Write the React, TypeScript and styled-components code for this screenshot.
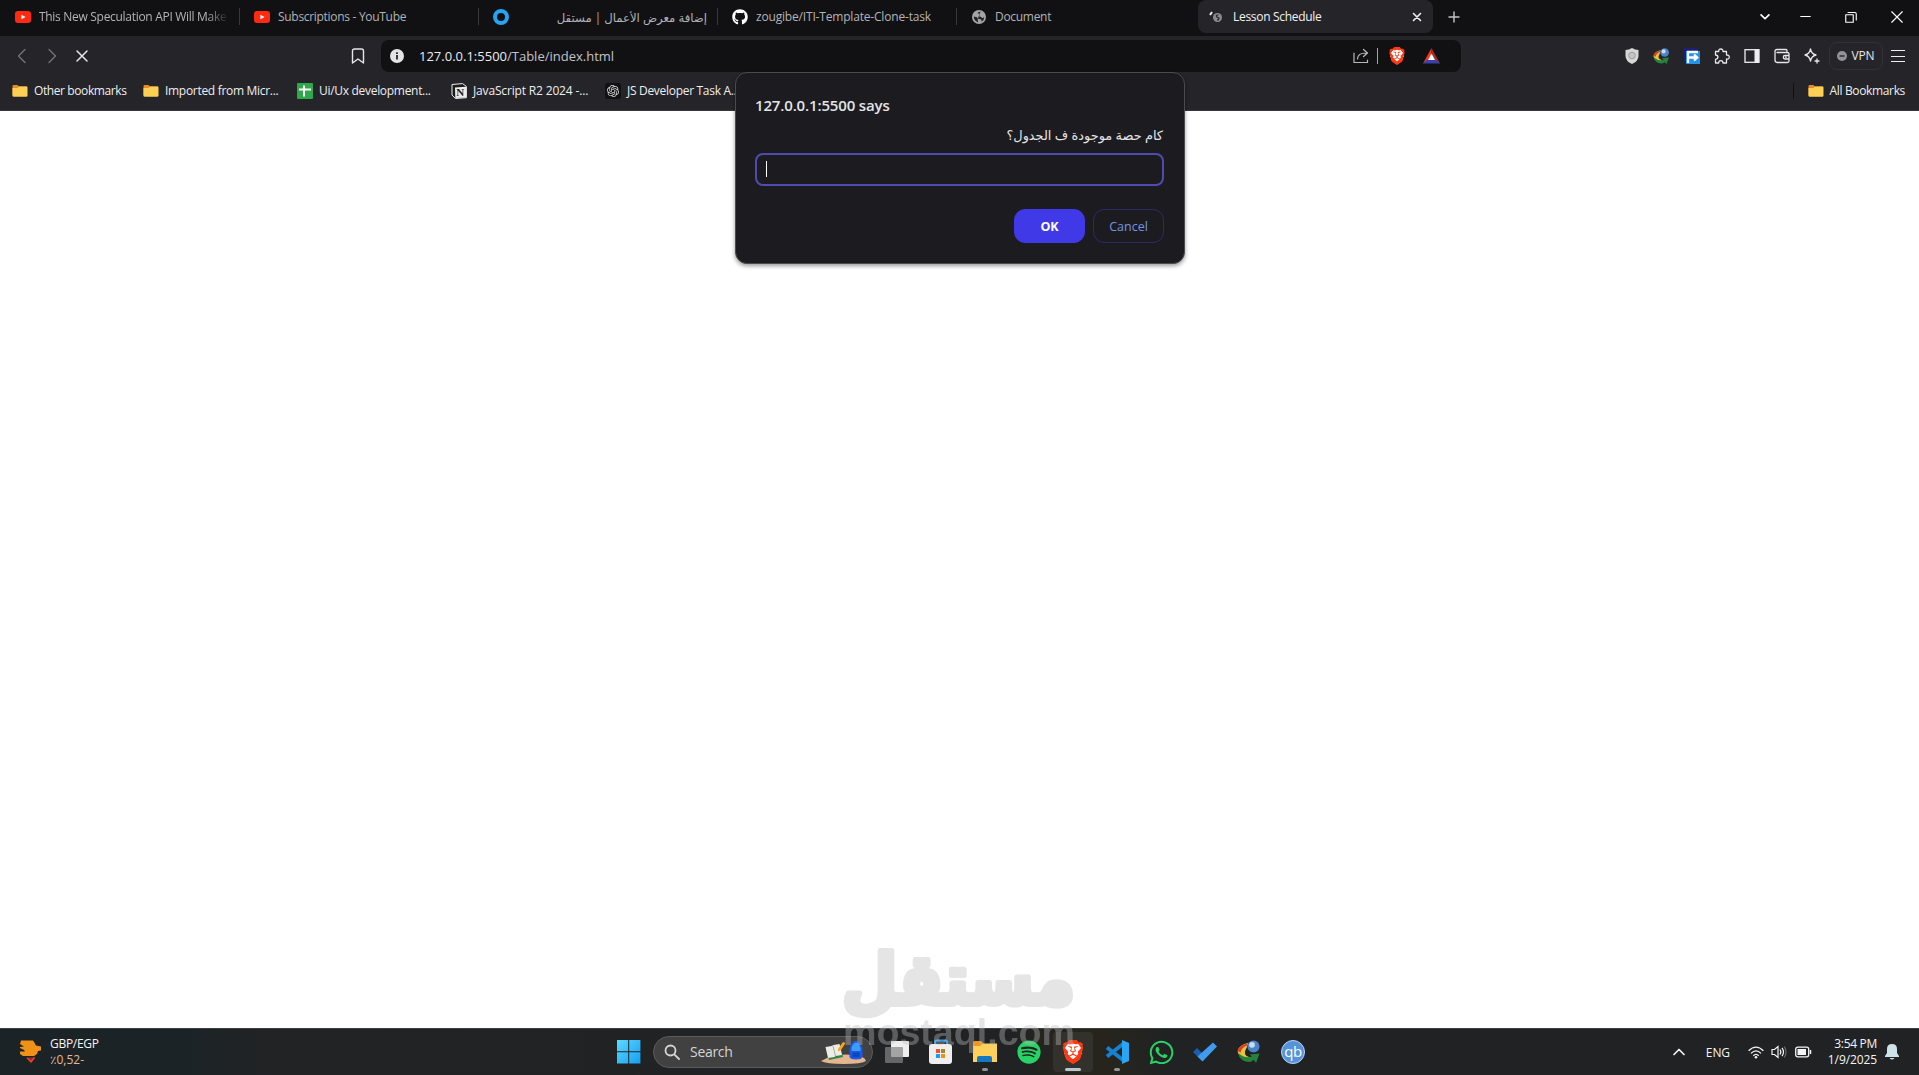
import type { ReactNode } from "react";
import { FaGithub, FaSpotify, FaWhatsapp } from "react-icons/fa";
import { SiBrave, SiOpenai } from "react-icons/si";
import styled, { createGlobalStyle } from "styled-components";

const GlobalStyle = createGlobalStyle`
  * {
    box-sizing: border-box;
  }
  body {
    margin: 0;
    background-color: white;
    font-family: "Open Sans", "Noto Sans", "DejaVu Sans", sans-serif;
    overflow: hidden;
  }
  svg {
    display: block;
    flex-shrink: 0;
  }
`;

const Desktop = styled.div`
  position: relative;
  display: flex;
  flex-direction: column;
  width: 1919px;
  height: 1075px;
  overflow: hidden;
`;
const Label = styled.span<{ $size?: number; $spacing?: number }>`
  font-size: ${(p) => p.$size ?? 12}px;
  letter-spacing: ${(p) => p.$spacing ?? -0.3}px;
  line-height: 16px;
  white-space: nowrap;
`;

const TabBar = styled.div`
  display: flex;
  height: 36px;
  padding-left: 1px;
  background-color: #111113;
  color: #b3b3b6;
`;
const TabItem = styled.div<{ $last?: boolean }>`
  display: flex;
  align-items: center;
  width: 239px;
  height: 33px;
  padding-left: ${(p) => (p.$last ? 15 : 14)}px;
  gap: ${(p) => (p.$last ? 9 : 8)}px;
  position: relative;
  &::after {
    content: "";
    position: absolute;
    right: 0;
    top: 8px;
    width: 1px;
    height: 17px;
    background-color: ${(p) => (p.$last ? "transparent" : "#39393c")};
  }
`;
const TabTitle = styled(Label)<{ $fade?: boolean }>`
  width: 190px;
  overflow: hidden;
  mask-image: ${(p) =>
    p.$fade ? "linear-gradient(to right, black 88%, transparent)" : "none"};
`;
const ArabicTitle = styled(TabTitle)`
  direction: rtl;
  font-size: 11.7px;
  letter-spacing: 0;
`;
const ActiveTab = styled(TabItem)`
  width: 235px;
  margin-left: 2px;
  padding: 0 8px 0 11px;
  gap: 10px;
  border-radius: 8px;
  background-color: #252529;
  color: #f1f1f3;
`;
const ActiveTitle = styled(Label)`
  flex: 1;
`;
const NewTab = styled.div`
  display: flex;
  align-items: center;
  height: 33px;
  margin-left: 13px;
  color: #c5c5c8;
`;
const WindowButtons = styled.div`
  display: flex;
  align-items: center;
  gap: 34px;
  height: 33px;
  margin-left: auto;
  padding-right: 16px;
  color: white;
  svg:first-child {
    margin-right: -6px;
  }
`;

const Toolbar = styled.div`
  display: flex;
  align-items: center;
  height: 40px;
  padding: 0 14px;
  background-color: #252529;
  color: #e6e6e8;
`;
const NavButtons = styled.div`
  display: flex;
  gap: 14px;
  width: 336px;
`;
const AddressBar = styled.div`
  display: flex;
  align-items: center;
  width: 1080px;
  height: 32px;
  margin-left: 15px;
  padding: 0 21px 0 9px;
  border-radius: 8px;
  background-color: #111113;
`;
const Url = styled(Label)`
  margin-left: 15px;
  color: #c3c3c8;
  b {
    font-weight: 400;
    color: #ececf0;
  }
`;
const AddressActions = styled.div`
  display: flex;
  align-items: center;
  margin-left: auto;
`;
const Divider = styled.div<{ $color: string }>`
  width: 1px;
  height: 16px;
  background-color: ${(p) => p.$color};
`;
const ShareDivider = styled(Divider)`
  margin: 0 10px 0 8px;
`;
const Extensions = styled.div`
  display: flex;
  align-items: center;
  gap: 14px;
  margin-left: auto;
`;
const Vpn = styled.div`
  display: flex;
  align-items: center;
  justify-content: center;
  gap: 4px;
  width: 54px;
  height: 28px;
  margin: 0 -6px 0 -5px;
  border: 1px solid #323236;
  border-radius: 8px;
`;

const BookmarkBar = styled.div`
  display: flex;
  align-items: center;
  height: 35px;
  padding: 0 14px 5px 12px;
  border-bottom: 1px solid #38383c;
  background-color: #252529;
  color: #eeeef0;
`;
const BookmarkItem = styled.div<{ $width?: number }>`
  display: flex;
  align-items: center;
  gap: 6px;
  width: ${(p) => (p.$width ? `${p.$width}px` : "auto")};
`;
const AllBookmarks = styled.div`
  display: flex;
  align-items: center;
  gap: 14px;
  margin-left: auto;
`;
const Page = styled.main`
  flex: 1;
  background-color: white;
`;

const Dialog = styled.div`
  position: absolute;
  top: 72px;
  left: 735px;
  width: 450px;
  height: 192px;
  padding: 23px 20px 20px 19px;
  border: 1px solid #4b4b4f;
  border-radius: 12px;
  background-color: #1c1c20;
  color: #e4e4e8;
  box-shadow: 0 2px 4px rgba(0, 0, 0, 0.4);
`;
const DialogTitle = styled.h1`
  margin: 0;
  font-size: 15px;
  font-weight: 600;
  line-height: 18px;
  letter-spacing: -0.15px;
`;
const Message = styled.p`
  margin: 12px 0 0;
  padding-right: 1px;
  direction: rtl;
  font-size: 12.9px;
  line-height: 18px;
`;
const PromptField = styled.div`
  display: flex;
  align-items: center;
  height: 33px;
  margin-top: 9px;
  padding-left: 9px;
  border: 2px solid #4f4bb0;
  border-radius: 8px;
`;
const Caret = styled.div`
  width: 1px;
  height: 16px;
  margin-bottom: 2px;
  background-color: white;
`;
const Actions = styled.div`
  display: flex;
  justify-content: flex-end;
  gap: 8px;
  margin-top: 23px;
`;
const Button = styled.button`
  width: 71px;
  height: 34px;
  padding: 0;
  border: 1px solid #2d2a66;
  border-radius: 11px;
  background-color: transparent;
  color: #7494e4;
  font-family: inherit;
  font-size: 12.5px;
  font-weight: 500;
`;
const OkButton = styled(Button)`
  border-color: #3f39e8;
  background-color: #3f39e8;
  color: white;
  font-weight: 700;
`;

const Taskbar = styled.footer`
  display: flex;
  align-items: center;
  height: 47px;
  border-top: 1px solid #3c3f40;
  background: linear-gradient(
    to right,
    #1c2326 0,
    #1c2326 190px,
    #212325 260px,
    #202224 1010px,
    #26241d 1070px,
    #26241d 1110px,
    #202224 1180px
  );
  color: #f4f4f4;
`;
const Widget = styled.div`
  display: flex;
  align-items: center;
  gap: 8px;
  width: 607px;
  padding-left: 19px;
`;
const Stack = styled.div<{ $align?: string }>`
  display: flex;
  flex-direction: column;
  align-items: ${(p) => p.$align ?? "flex-start"};
`;
const Change = styled(Label)`
  color: #e3b797;
`;
const AppSlot = styled.div<{ $active?: boolean }>`
  display: flex;
  flex-direction: column;
  align-items: center;
  justify-content: center;
  position: relative;
  width: 40px;
  height: 40px;
  margin: 0 2px;
  border-radius: 4px;
  background-color: ${(p) => (p.$active ? "#33312b" : "transparent")};
`;
const Indicator = styled.div<{ $wide?: boolean }>`
  position: absolute;
  bottom: 1px;
  width: ${(p) => (p.$wide ? 16 : 6)}px;
  height: 3px;
  border-radius: 2px;
  background-color: ${(p) => (p.$wide ? "#b9c8cf" : "#929496")};
`;
const SearchBox = styled.div`
  display: flex;
  align-items: center;
  width: 220px;
  height: 32px;
  margin: 0 2px;
  padding: 0 6px 0 10px;
  border: 1px solid #5a5b5a;
  border-radius: 16px;
  background-color: #404140;
  color: #d5d5d5;
`;
const SearchText = styled(Label)`
  margin: 0 auto 0 10px;
`;
const Tray = styled.div`
  display: flex;
  align-items: center;
  margin-left: auto;
  padding-right: 20px;
`;
const Language = styled(Label)`
  margin: 2px 18px 0 19px;
`;
const TrayIcons = styled.div`
  display: flex;
  align-items: center;
  gap: 7px;
  width: 80px;
`;
const Clock = styled(Stack)`
  width: 49px;
  margin-right: 8px;
`;

const Watermark = styled.svg`
  position: absolute;
  top: 900px;
  left: 785px;
`;

interface IStroke {
  d: string;
  size?: number;
  width?: number;
  color?: string;
}

const Stroke = ({ d, size = 16, width = 1.3, color }: IStroke) => (
  <svg
    width={size}
    height={size}
    viewBox="0 0 16 16"
    fill="none"
    stroke={color ?? "currentColor"}
    strokeWidth={width}
    strokeLinecap="round"
    strokeLinejoin="round"
  >
    <path d={d} />
  </svg>
);

const YouTubeIcon = () => (
  <svg width="16" height="16" viewBox="0 0 16 16">
    <rect y="2" width="16" height="12" rx="3" fill="#ff2a12" />
    <path d="M6.4 5.7v4.6L10.5 8z" fill="white" />
  </svg>
);
const GlobeIcon = () => (
  <svg width="14" height="14" viewBox="0 0 14 14">
    <circle cx="7" cy="7" r="7" fill="#a4a4a7" />
    <path
      d="M8.5 1.8Q6 1.5 5.5 3.5q2.5-.5 2.5 1T6 6.3q3.5 0 4 2 1.2-.3 2.3-1.3 0 3-2.800 4.800Q10 9 7.500 9T5 7.200L1.800 6.500q0 4 4.200 5.800.5-1.500-.5-2.300"
      fill="#202023"
    />
  </svg>
);
const LoadingIcon = () => (
  <svg width="14" height="14" viewBox="0 0 14 14">
    <path d="m1 5 2-3" stroke="#eeeeee" strokeWidth="2" />
    <circle cx="8.5" cy="7.5" r="4.5" fill="#8b8b8e" />
    <path
      d="M9.5 5Q7 4.8 7.3 6.2T10 8q0 2-2 2"
      fill="none"
      stroke="#252529"
      strokeWidth="1.1"
    />
  </svg>
);
const FolderIcon = () => (
  <svg width="16" height="16" viewBox="0 0 16 16">
    <path d="M.5 3.2Q.5 2 1.7 2H5.5L7 3.5h8v9H2Q.5 13 .5 12z" fill="#e98b24" />
    <path d="M.5 5h5L7 3.5h7.5q1 0 1 1v8q0 1.3-1.3 1.3H1.8Q.5 13.8.5 12.5z" fill="#fdd055" />
  </svg>
);
const SheetIcon = () => (
  <svg width="16" height="16" viewBox="0 0 16 16">
    <rect width="16" height="16" rx="1" fill="#2fa84b" />
    <path d="M2 6.5h12M7 2.5v11" stroke="white" strokeWidth="2" />
  </svg>
);
const NotionIcon = () => (
  <svg width="16" height="16" viewBox="0 0 16 16">
    <path d="M1 1.5 11.5.6 15.4 3.5v11.2l-11 .8L1 12z" fill="#1b1b1d" stroke="#eeeeee" />
    <path d="M4 4.5 15 3.8v10.7L4.3 15z" fill="#eeeeee" />
    <text x="5.2" y="13.2" fontFamily="Liberation Serif" fontSize="11" fontWeight="700" fill="#1b1b1d">
      N
    </text>
  </svg>
);
const ChatIcon = styled.div`
  display: flex;
  align-items: center;
  justify-content: center;
  width: 16px;
  height: 16px;
  border-radius: 3px;
  background-color: #111113;
  color: #dddddd;
`;
const InfoIcon = () => (
  <svg width="14" height="14" viewBox="0 0 14 14">
    <circle cx="7" cy="7" r="7" fill="#e4e4e6" />
    <path d="M7 6v4.5M7 3.2v1.7" stroke="#1b1b1d" strokeWidth="1.7" />
  </svg>
);
// the face is cut out of the icon, so the white shows through from behind
const Lion = styled.div<{ $gap?: number }>`
  display: flex;
  margin-right: ${(p) => p.$gap ?? 0}px;
  color: #fb3a14;
  background: radial-gradient(ellipse at 50% 48%, white 52%, transparent 53%);
`;
const BatIcon = () => (
  <svg width="17" height="16" viewBox="0 0 17 16">
    <path d="M8.5 0 0 15.5l8.5-5z" fill="#ff3518" />
    <path d="M8.5 0 17 15.5l-8.5-5z" fill="#9e3024" />
    <path d="M0 15.5h17l-4-4H4z" fill="#3d41a7" />
    <path d="m8.5 5.5 3.5 6.5H5z" fill="white" />
  </svg>
);
const ShieldIcon = () => (
  <svg width="14" height="16" viewBox="0 0 14 16">
    <path d="M7 0q3 2 6.5 2v6q0 5-6.5 8Q.5 13 .5 8V2Q4 2 7 0z" fill="#d6d6d6" />
    <circle cx="7" cy="7.5" r="3.3" fill="#c4c4c4" stroke="#9b9b9b" />
  </svg>
);
const DownloadManagerIcon = ({ size }: { size: number }) => (
  <svg width={size} height={size} viewBox="0 0 24 24">
    <path d="M11 3C3 5 0 9 1 13q3 8 12 8l-1-4q-7-2-2-10z" fill="#e8c43b" />
    <path d="M10 3.5C4 5 1 8 .5 11l3 1.5q1-5 6.5-7z" fill="#d93f2a" />
    <path d="M1 13q2 9 12 9l4-2 2 3 3.5-9.500-10 1 2.500 2Q8 19 1 13z" fill="#24823c" />
    <circle cx="16.5" cy="6.5" r="6" fill="#4b83ca" />
    <circle cx="15" cy="4.8" r="2.9" fill="#c4dcf0" />
  </svg>
);
const ForwardIcon = () => (
  <svg width="16" height="16" viewBox="0 0 16 16">
    <path d="M0 0h13v14H0z" fill="#1b2177" />
    <path d="M2 3h14v13H2z" fill="#2492e8" />
    <path d="M4 15V4h10M4 9.5h8M10 6.7l3.2 2.8L10 12.500" fill="none" stroke="white" strokeWidth="2.3" />
  </svg>
);
const PuzzleIcon = () => (
  <Stroke d="M1.5 3.5h3.2Q4.5 1 6.8 1T9 3.5h3.5V7q2.8-.2 2.8 2.1T12.5 11v4H9q0-2.3-2.2-2.3T4.7 15H1.5v-3.7Q4 11 4 9.100T1.500 7z" />
);
const PanelIcon = () => (
  <svg width="16" height="16" viewBox="0 0 16 16">
    <rect x="1" y="1.7" width="14" height="12.6" fill="none" stroke="#eeeeee" strokeWidth="1.3" />
    <path d="M10.5 1.5H15v13h-4.500z" fill="#eeeeee" />
  </svg>
);
const WalletIcon = () => (
  <Stroke d="M13 4.5V2.5Q13 1.5 12 1.5H3Q1 1.5 1 3.5V12q0 2.5 2.5 2.5h10q1.5 0 1.5-1.5V6q0-1.5-1.5-1.5H3M15 7.5h-4q-1.7 0-1.7 1.7T11 11h4M11.5 9.2h.8" />
);
const SparkleIcon = () => (
  <Stroke d="M6.5 1q1 5 5.5 6-4.5 1-5.5 6-1-5-5.5-6Q5.5 6 6.5 1zM13 11v4M11 13h4" />
);
const MenuIcon = () => (
  <svg width="14" height="16" viewBox="0 0 14 16">
    <path d="M0 2.5h14M0 8.5h14M0 13.5h14" stroke="#eeeeee" />
  </svg>
);
const VpnDot = () => (
  <svg width="10" height="10" viewBox="0 0 10 10">
    <circle cx="5" cy="5" r="5" fill="#929297" />
    <path d="M2.5 5h5" stroke="#252529" strokeWidth="1.4" />
  </svg>
);

const PoundIcon = () => (
  <svg width="23" height="24" viewBox="0 0 23 24">
    <path
      d="M2 .5h12l1 1.500 2 3.500 5 1v4L19 11l-1 3-3 2H4l-3-2v-2.500h5l-1-1.500L1 8V7l4-.5L1 4z"
      fill="#ef9217"
    />
    <path d="M7.5 17.5h9L12 23.5z" fill="#9d2c20" />
    <path d="m8 18 4 3.5 3.5-4" fill="none" stroke="#f14530" strokeWidth="1.3" />
  </svg>
);
const StartIcon = () => (
  <svg width="24" height="24" viewBox="0 0 24 24">
    <defs>
      <linearGradient id="start" x2="1" y2="1">
        <stop stopColor="#5bd9ff" />
        <stop offset="1" stopColor="#159ff1" />
      </linearGradient>
    </defs>
    <path d="M0 0h11.2v11.2H0zM12.2 0h11.2v11.2H12.2zM0 12.2h11.2v11.2H0zM12.2 12.2h11.2v11.2H12.2z" fill="url(#start)" />
  </svg>
);
const SearchArt = () => (
  <svg width="45" height="24" viewBox="0 0 45 24">
    <path d="M0 21q14-8 32-6 12 1 13 6-4 3-22 3T0 21z" fill="#e5b68d" />
    <path d="m5 8 14-3 3 12-14 3z" fill="#31824b" />
    <path d="m4.5 7 6-1 2-1 6-1 2.5 11-6.5 1-1 1-6.5 1z" fill="#eceee5" />
    <path d="m12 6 2.5 10" stroke="#aaaaaa" />
    <path d="m17 9 5-7 2.5 1-4.500 7-3 1.500z" fill="#f9a422" />
    <path d="M28.5 17V8q1-4 4-6.5Q35 0 37.5 1.5 40.5 4 41.5 8v9q-1 2.5-6.5 2.5T28.500 17z" fill="#1c58e6" />
    <path d="M30.5 8q1-4.5 4.5-5.5Q38.5 3.5 39.5 8v3h-9z" fill="#379dff" />
    <path d="M31.5 12.5h7V17h-7z" fill="#0d45bc" />
  </svg>
);
const TaskViewIcon = () => (
  <svg width="24" height="24" viewBox="0 0 24 24">
    <rect x="6" y="1" width="18" height="16" rx="1" fill="#eeeeee" />
    <rect y="7" width="18" height="16" rx="1" fill="#858585" fillOpacity=".7" />
  </svg>
);
const StoreIcon = () => (
  <svg width="24" height="26" viewBox="0 0 24 26">
    <path d="M6 7V3q0-1.5 1.5-1.5h9Q18 1.5 18 3v4" fill="none" stroke="#2f9bf0" strokeWidth="2" />
    <rect y="5" width="23" height="20" rx="3" fill="#efefef" />
    <path d="M7 10h4v4H7z" fill="#f4502c" />
    <path d="M12 10h4v4h-4z" fill="#a58a24" />
    <path d="M7 15h4v4H7z" fill="#16a1ef" />
    <path d="M12 15h4v4h-4z" fill="#f38d1c" />
  </svg>
);
const ExplorerIcon = () => (
  <svg width="24" height="22" viewBox="0 0 24 22">
    <path d="M0 1.5Q0 0 1.5 0H8l3 3-3 4H0z" fill="#ed971f" />
    <path d="M0 5h7l3-2.5h14V21H0z" fill="#ffd05a" />
    <path d="M4 21v-4q0-2 2-2h11q2 0 2 2v4z" fill="#1678c2" />
  </svg>
);
const CodeIcon = () => (
  <svg width="24" height="24" viewBox="0 0 24 24">
    <path d="M2 7.5 18 20M2 16.5 18 4" stroke="#1581cf" strokeWidth="4" />
    <path d="m17 0 7 3v18l-7 3z" fill="#2aa5f5" />
  </svg>
);
const TodoIcon = () => (
  <svg width="24" height="20" viewBox="0 0 24 20">
    <path d="m0 10 4-4 8 8-4 4z" fill="#195fad" />
    <path d="M20 0.500 24 4.500 9.500 19.500 4.500 14.500z" fill="#409bf0" />
  </svg>
);
const TorrentIcon = styled.div`
  display: flex;
  align-items: center;
  justify-content: center;
  width: 24px;
  height: 24px;
  padding-bottom: 3px;
  border: 1px solid #bcd5ef;
  border-radius: 50%;
  background-color: #5593dc;
  color: white;
  font-size: 15px;
  line-height: 20px;
  letter-spacing: -0.5px;
`;
const WifiIcon = () => (
  <svg width="16" height="13" viewBox="0 0 16 13" fill="none" stroke="#f4f4f4" strokeWidth="1.3">
    <path d="M.6 4.8q7.4-7.4 14.8 0M3 7.4q5-5 10 0M5.3 9.7q2.7-2.7 5.4 0" />
    <circle cx="8" cy="11.2" r="1.3" fill="#f4f4f4" stroke="none" />
  </svg>
);
const SpeakerIcon = () => (
  <svg width="17" height="14" viewBox="0 0 17 14" fill="none" stroke="#f4f4f4" strokeWidth="1.2">
    <path d="M1 4.5h2.5L7 1.5v11l-3.5-3H1z" />
    <path d="M9 4.5q1.7 2.5 0 5M11 2.8q3 4.2 0 8.4" />
    <path d="M13.3 1.5q3.5 5.5 0 11" stroke="#68696a" />
  </svg>
);
const BatteryIcon = () => (
  <svg width="17" height="12" viewBox="0 0 17 12">
    <rect x=".7" y="1.2" width="13" height="9.6" rx="2" fill="none" stroke="#f4f4f4" strokeWidth="1.3" />
    <rect x="2.5" y="3" width="8.5" height="6" fill="#f4f4f4" />
    <path d="M15.5 4v4" stroke="#f4f4f4" strokeWidth="1.5" />
  </svg>
);
const BellIcon = () => (
  <svg width="14" height="16" viewBox="0 0 14 16">
    <path d="M7 0q5 0 5 5v4l2 3v1H0v-1l2-3V5q0-5 5-5zM4.5 14h5q-2.5 3-5 0z" fill="#cde3e9" />
  </svg>
);

interface IApp {
  icon: ReactNode;
  running?: boolean;
  active?: boolean;
}

const apps: IApp[] = [
  { icon: <TaskViewIcon /> },
  { icon: <StoreIcon /> },
  { icon: <ExplorerIcon />, running: true },
  { icon: <FaSpotify size={24} color="#27d366" /> },
  {
    icon: (
      <Lion>
        <SiBrave size={24} />
      </Lion>
    ),
    running: true,
    active: true,
  },
  { icon: <CodeIcon />, running: true },
  { icon: <FaWhatsapp size={27} color="#27d366" /> },
  { icon: <TodoIcon /> },
  { icon: <DownloadManagerIcon size={24} /> },
  { icon: <TorrentIcon>qb</TorrentIcon> },
];

export default function App() {
  return (
    <Desktop>
      <GlobalStyle />
      <TabBar>
        <TabItem>
          <YouTubeIcon />
          <TabTitle $fade>This New Speculation API Will Make</TabTitle>
        </TabItem>
        <TabItem>
          <YouTubeIcon />
          <TabTitle>Subscriptions - YouTube</TabTitle>
        </TabItem>
        <TabItem>
          <svg width="16" height="16" viewBox="0 0 16 16">
            <circle cx="8" cy="8" r="6" fill="none" stroke="#26a4f2" strokeWidth="4" />
          </svg>
          <ArabicTitle>إضافة معرض الأعمال | مستقل</ArabicTitle>
        </TabItem>
        <TabItem>
          <FaGithub size={16} color="white" />
          <TabTitle $spacing={-0.18}>zougibe/ITI-Template-Clone-task</TabTitle>
        </TabItem>
        <TabItem $last>
          <GlobeIcon />
          <TabTitle>Document</TabTitle>
        </TabItem>
        <ActiveTab $last>
          <LoadingIcon />
          <ActiveTitle>Lesson Schedule</ActiveTitle>
          <Stroke d="m4.5 4.5 7 7m0-7-7 7" width={1.6} />
        </ActiveTab>
        <NewTab>
          <Stroke d="M8 3v10M3 8h10" width={1.4} />
        </NewTab>
        <WindowButtons>
          <Stroke d="m3.5 5.5 4.5 4.5 4.5-4.5" size={14} width={2} />
          <Stroke d="M1 8h14" size={11} width={1.5} />
          <Stroke d="M1 5h10v10H1zM4 2h9q2 0 2 2v8" size={12} width={1.5} />
          <Stroke d="m1 1 14 14M15 1 1 15" size={12} width={1.5} />
        </WindowButtons>
      </TabBar>
      <Toolbar>
        <NavButtons>
          <Stroke d="M11 1.5 4.5 8l6.5 6.5" color="#747478" />
          <Stroke d="m5 1.5 6.5 6.5L5 14.5" color="#747478" />
          <Stroke d="m3 3 10 10m0-10L3 13" width={1.5} />
        </NavButtons>
        <Stroke d="M2.5 15V3q0-2 2-2h7q2 0 2 2v12L8 11z" width={1.4} />
        <AddressBar>
          <InfoIcon />
          <Url $size={13} $spacing={0}>
            <b>127.0.0.1:5500</b>/Table/index.html
          </Url>
          <AddressActions>
            <Stroke d="M1 5v9.5h13.5V12M4.5 11q0-6 9-6M10.5 1.5 14.5 5l-4 3.5" width={1.2} color="#b8b8bb" />
            <ShareDivider $color="#a4a4a8" />
            <Lion $gap={17}>
              <SiBrave size={18} />
            </Lion>
            <BatIcon />
          </AddressActions>
        </AddressBar>
        <Extensions>
          <ShieldIcon />
          <DownloadManagerIcon size={17} />
          <ForwardIcon />
          <PuzzleIcon />
          <PanelIcon />
          <WalletIcon />
          <SparkleIcon />
          <Vpn>
            <VpnDot />
            <Label $spacing={-0.1}>VPN</Label>
          </Vpn>
          <MenuIcon />
        </Extensions>
      </Toolbar>
      <BookmarkBar>
        <BookmarkItem $width={131}>
          <FolderIcon />
          <Label $spacing={-0.4}>Other bookmarks</Label>
        </BookmarkItem>
        <BookmarkItem $width={154}>
          <FolderIcon />
          <Label>Imported from Micr...</Label>
        </BookmarkItem>
        <BookmarkItem $width={154}>
          <SheetIcon />
          <Label>Ui/Ux development...</Label>
        </BookmarkItem>
        <BookmarkItem $width={154}>
          <NotionIcon />
          <Label $spacing={-0.16}>JavaScript R2 2024 -...</Label>
        </BookmarkItem>
        <BookmarkItem>
          <ChatIcon>
            <SiOpenai size={12} />
          </ChatIcon>
          <Label>JS Developer Task A...</Label>
        </BookmarkItem>
        <AllBookmarks>
          <Divider $color="#111113" />
          <BookmarkItem>
            <FolderIcon />
            <Label $spacing={-0.35}>All Bookmarks</Label>
          </BookmarkItem>
        </AllBookmarks>
      </BookmarkBar>
      <Page />
      <Taskbar>
        <Widget>
          <PoundIcon />
          <Stack>
            <Label>GBP/EGP</Label>
            <Change $spacing={0}>٪0,52-</Change>
          </Stack>
        </Widget>
        <AppSlot>
          <StartIcon />
        </AppSlot>
        <SearchBox>
          <Stroke d="M11.5 6.5a5 5 0 1 1-10 0 5 5 0 0 1 10 0zM10.3 10.3l4.7 4.7" width={1.8} />
          <SearchText $size={14}>Search</SearchText>
          <SearchArt />
        </SearchBox>
        {apps.map(({ icon, running, active }, index) => (
          <AppSlot key={index} $active={active}>
            {icon}
            {running && <Indicator $wide={active} />}
          </AppSlot>
        ))}
        <Tray>
          <Stroke d="m3 10.5 5-5 5 5" width={1.7} />
          <Language $spacing={-0.1}>ENG</Language>
          <TrayIcons>
            <WifiIcon />
            <SpeakerIcon />
            <BatteryIcon />
          </TrayIcons>
          <Clock $align="flex-end">
            <Label>3:54 PM</Label>
            <Label $spacing={-0.1}>1/9/2025</Label>
          </Clock>
          <BellIcon />
        </Tray>
      </Taskbar>
      <Dialog>
        <DialogTitle>127.0.0.1:5500 says</DialogTitle>
        <Message>كام حصة موجودة ف الجدول؟</Message>
        <PromptField>
          <Caret />
        </PromptField>
        <Actions>
          <OkButton>OK</OkButton>
          <Button>Cancel</Button>
        </Actions>
      </Dialog>
      <Watermark width="350" height="175" viewBox="0 0 350 175">
        <g fill="#bdbdbd" stroke="#bdbdbd" strokeLinejoin="round" opacity=".38" fontWeight="700">
          <text x="290" y="104" direction="rtl" fontFamily="DejaVu Sans" fontSize="70" strokeWidth="6" textLength="233" lengthAdjust="spacingAndGlyphs">
            مستقل
          </text>
          <text x="58" y="145" fontFamily="Liberation Sans" fontSize="37" stroke="none" textLength="232" lengthAdjust="spacingAndGlyphs">
            mostaql.com
          </text>
        </g>
      </Watermark>
    </Desktop>
  );
}
